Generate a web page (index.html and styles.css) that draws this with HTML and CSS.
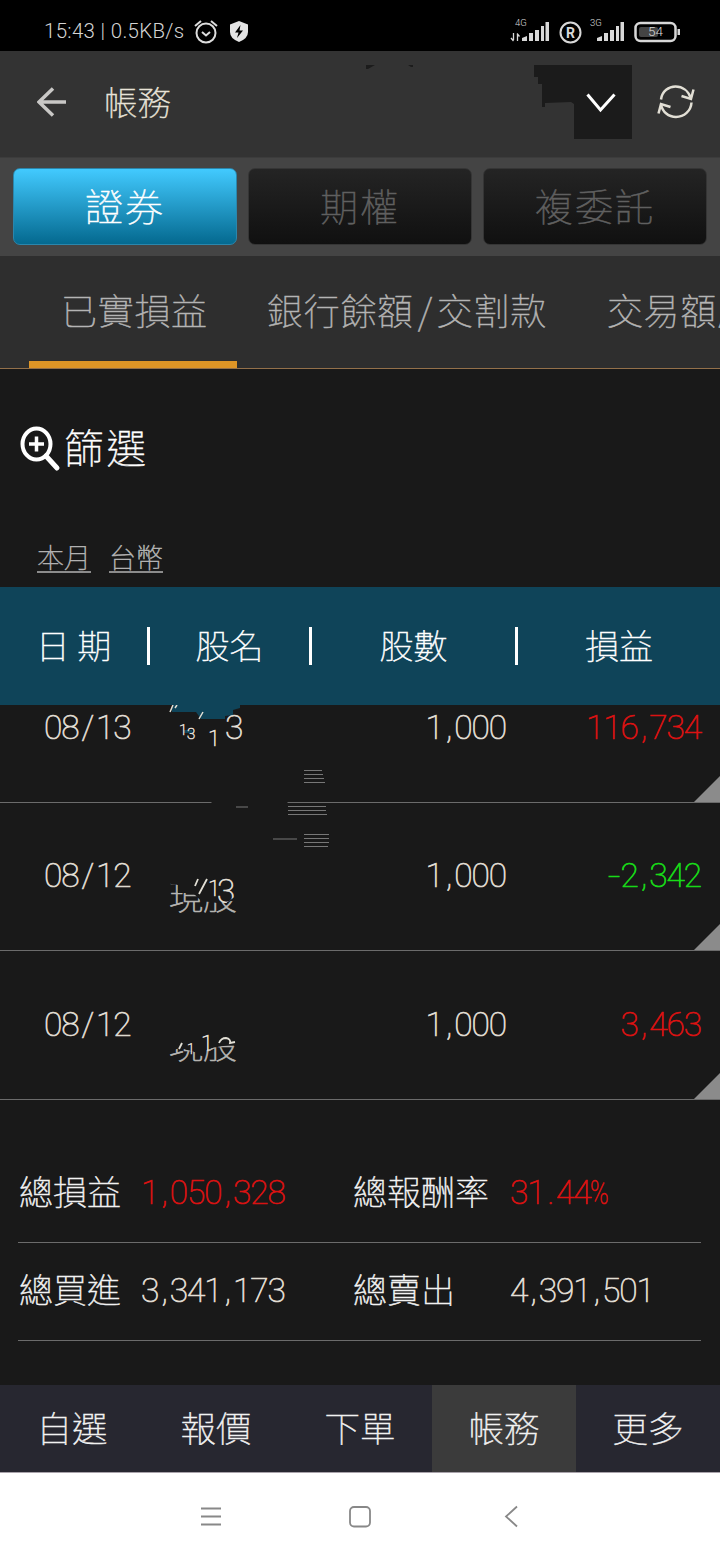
FILE: index.html
```html
<!DOCTYPE html>
<html lang="zh-Hant">
  <head>
    <meta charset="UTF-8" />
    <meta name="viewport" content="width=device-width, initial-scale=1.0" />
    <title>帳務</title>
    <link rel="stylesheet" href="styles.css">
  </head>
  <body>
    <div class="status">
      <span class="status-text">15:43 | 0.5KB/s</span>
      <svg class="alarm" width="24" height="24" viewBox="0 0 24 24" fill="none" stroke="#ddd" stroke-width="2">
        <circle cx="12" cy="13" r="9.5" />
        <path d="M1 6L7 1M17 1l6 5M8 12l4 3.500 4-3.500" />
      </svg>
      <svg class="shield" width="18" height="21" viewBox="0 0 18 21">
        <path fill="#e4e4e4" d="M9 0l9 3.500V11q0 6.500-9 10Q0 17.500 0 11V3.500z" />
        <path fill="#000" d="M10.500 4L5 11.500h3.500L7 17l6-7.500H9.500z" />
      </svg>
      <div class="status-right">
        <svg width="172" height="34" viewBox="510 14 172 34" fill="#d8d8d8">
          <path d="M522 41v-3l5-2v5zM529 41v-8h4v8zM535 41V30h4v11zM541 41V26h3v15zM545.500 41V22h3.500v19z" />
          <path d="M597 41v-3l5-2v5zM604 41v-8h4v8zM610 41V30h4v11zM616 41V26h3v15zM620.500 41V22h3.500v19z" />
          <path d="M513.500 33v7M511 38l2.500 3M517.500 41v-7M517 33.500l2.500 3" fill="none" stroke="#d8d8d8" stroke-width="1.300" />
          <text x="515" y="26" font-size="9.500">4G</text>
          <text x="590" y="26" font-size="9.500">3G</text>
          <circle cx="570.500" cy="32.500" r="10" fill="none" stroke="#d8d8d8" stroke-width="2" />
          <text x="566" y="37.500" font-size="14" class="r-mark">R</text>
          <rect x="635.500" y="23" width="40" height="18" rx="5" fill="none" stroke="#d8d8d8" stroke-width="2.500" />
          <rect x="639" y="27" width="19" height="10" rx="2" fill="#444" />
          <rect x="677.500" y="29" width="2.500" height="6" />
          <text x="648" y="36" font-size="13.500">54</text>
        </svg>
      </div>
    </div>

    <div class="header">
      <svg class="back" width="30" height="30" viewBox="0 0 30 30" fill="none" stroke="#c9c8c6" stroke-width="3.500">
        <path d="M29 15H2M16 1.500L2 15l14 13.500" />
      </svg>
      <h1>帳務</h1>
      <svg class="marks" width="48" height="5" viewBox="0 0 48 5" fill="#1c1c1c">
        <path d="M0 0h9L2 4H0zM42 0h5v2h-2z" />
      </svg>
      <svg class="picker" width="98" height="74" viewBox="0 0 98 74">
        <path fill="#1b1b1b" d="M0 0h98v74H40V39l-3-2-26 1v4H8V19H4v-7H0z" />
        <path d="M53.500 29.500L66.500 45l14-15.500" fill="none" stroke="#fff" stroke-width="3" />
      </svg>
      <svg class="refresh" width="38" height="36" viewBox="0 0 38 36" fill="none" stroke="#e2dfd5" stroke-width="2.500">
        <path d="M4 15.500C5 7 12 2.500 18.500 2.500c7 0 13 4.500 15.500 12M34.500 18.500C34 27 27 33 19 33 11.500 33 5.500 28 4 20.500" />
        <path d="M24.500 12l9.500 3 2.500-9.500M1.500 29.500L4 20l9.500 3" />
      </svg>
    </div>

    <div class="segments">
      <button class="segment segment--active" type="button">證券</button>
      <button class="segment" type="button">期權</button>
      <button class="segment" type="button">複委託</button>
    </div>

    <div class="tabs">
      <a class="tab tab--active">已實損益</a>
      <a class="tab">銀行餘額<span class="slash">/</span>交割款</a>
      <a class="tab tab--last">交易額度</a>
    </div>

    <div class="filter">
      <svg width="42" height="46" viewBox="0 0 42 46" fill="none" stroke="#fff">
        <ellipse cx="16.500" cy="18" rx="14" ry="15.500" stroke-width="4" />
        <path d="M16.500 10.500v15M9 18h15" stroke-width="3.500" />
        <path d="M26 30l11 12" stroke-width="5" stroke-linecap="round" />
      </svg>
      <span>篩選</span>
    </div>

    <div class="conditions">
      <a>本月</a>
      <a>台幣</a>
    </div>

    <div class="table-head">
      <span class="th th-date">日 期</span>
      <span class="th th-name">股名</span>
      <span class="th th-qty">股數</span>
      <span class="th th-pl">損益</span>
    </div>

    <div class="table-body">
      <div class="row row--first">
        <span class="num date">08<i class="over">/</i>13</span>
        <span class="num qty">1<i>,</i>000</span>
        <span class="num pl up">116<i>,</i>734</span>
        <div class="corner"></div>
      </div>
      <div class="row">
        <span class="num date">08<i class="over">/</i>12</span>
        <span class="num qty">1<i>,</i>000</span>
        <span class="num pl down"><i class="minus">-</i>2<i>,</i>342</span>
        <div class="corner"></div>
      </div>
      <div class="row">
        <span class="num date">08<i class="over">/</i>12</span>
        <span class="num qty">1<i>,</i>000</span>
        <span class="num pl up">3<i>,</i>463</span>
        <div class="corner"></div>
      </div>
      <!-- leftovers of the name column -->
      <svg class="residue" width="170" height="370" viewBox="165 700 170 370">
        <clipPath id="cut-a">
          <path d="M165 883l13 2v8h15l8 8 16 2 23-3v15h-75z" />
        </clipPath>
        <clipPath id="cut-b">
          <path d="M165 1053l15-5 18 5 14-5 28-5v22h-75z" />
        </clipPath>
        <clipPath id="cut-c">
          <path d="M205 875h35v18l-14 10h-21z" />
        </clipPath>
        <path fill="#0f4459" d="M172 700h64v5h4v3l-7 2v5l-8 1v3h-24l-5-7h-24z" />
        <path d="M170 712l3-7M175 708l2-3M199 719l4-7" stroke="#e2dfd5" stroke-width="1.500" />
        <path d="M184 730h8v3h-8z" fill="#0f4459" />
        <g class="digits">
          <text x="179" y="735" font-size="15">1</text>
          <text x="187" y="739" font-size="15">3</text>
          <text x="208" y="746" font-size="22">1</text>
          <text x="225" y="738.500" font-size="33.500">3</text>
        </g>
        <path d="M211.500 802.500h76" stroke="#191919" stroke-width="3" />
        <path d="M304 770.500h18M304 774.500h19M304 778.500h20M304 782.500h21M288 806.500h38M288 810.500h38M288 814.500h39M304 834.500h25M304 838.500h25M304 842.500h25M304 846.500h24" stroke="#777" />
        <path d="M236 807h12M273 839h24" stroke="#484848" stroke-width="2" />
        <text class="han" x="169" y="910" font-size="34" clip-path="url(#cut-a)">現股</text>
        <path d="M195 886l3-7M199 894l8-15" stroke="#e2dfd5" stroke-width="1.800" />
        <g class="digits" clip-path="url(#cut-c)">
          <text x="208" y="896" font-size="22">1</text>
          <text x="217" y="903" font-size="33">3</text>
        </g>
        <text class="han" x="169" y="1059" font-size="34" clip-path="url(#cut-b)">現股</text>
        <path d="M179 1049l3-6" stroke="#e2dfd5" stroke-width="1.800" />
        <g class="digits">
          <text x="187" y="1054" font-size="14">1</text>
          <text x="201" y="1051" font-size="22">1</text>
        </g>
        <path d="M219 1043q2-5 7-5 5 1 4 5l5-1" fill="none" stroke="#e2dfd5" stroke-width="1.800" />
      </svg>
    </div>

    <div class="summary">
      <div class="summary-row">
        <span class="label">總損益</span><span class="num value up">1<i>,</i>050<i>,</i>328</span>
        <span class="label label--wide">總報酬率</span><span class="num value up">31<i>.</i>44<i class="percent">%</i></span>
      </div>
      <div class="summary-row">
        <span class="label">總買進</span><span class="num value">3<i>,</i>341<i>,</i>173</span>
        <span class="label label--wide">總賣出</span><span class="num value">4<i>,</i>391<i>,</i>501</span>
      </div>
    </div>

    <div class="nav">
      <a>自選</a>
      <a>報價</a>
      <a>下單</a>
      <a class="active">帳務</a>
      <a>更多</a>
    </div>

    <div class="system-nav">
      <svg width="720" height="87" viewBox="0 0 720 87" fill="none" stroke="#888" stroke-width="1.800">
        <path d="M201 35.500h20M201 43.500h20M201 51.500h20" />
        <rect x="350" y="34" width="20" height="19.500" rx="4" />
        <path d="M517 33.500l-11 10 11 10" />
      </svg>
    </div>
  </body>
</html>
```
FILE: styles.css
```css
* {
  box-sizing: border-box;
}

body {
  margin: 0;
  width: 720px;
  height: 1560px;
  overflow: hidden;
  background: #191919;
  color: #f2f2f2;
  font-family: "Noto Sans CJK TC", "Noto Sans", sans-serif;
  font-weight: 100;
  -webkit-text-stroke: 0.5px;
}

svg {
  display: block;
  flex: none;
  font-family: Roboto, sans-serif;
}

/* status bar */
.status {
  display: flex;
  height: 51px;
  padding-left: 44px;
  background: #000;
  font-weight: 300;
}
.status-text {
  width: 150px;
  margin-top: 17px;
  color: #d4d4d4;
  font-family: Roboto, sans-serif;
  font-size: 20.5px;
  letter-spacing: 0.3px;
  line-height: 29px;
  white-space: nowrap;
  -webkit-text-stroke: 0;
}
.alarm {
  margin-top: 20px;
}
.shield {
  margin: 21px 0 0 12px;
}
.status-right {
  margin: 14px 38px 0 auto;
}
.r-mark {
  font-weight: 700;
}

/* header */
.header {
  display: flex;
  height: 106px;
  padding-left: 37px;
  background: #333;
}
.back {
  margin-top: 36px;
}
.header h1 {
  width: 262px;
  margin: 27px 0 0 37px;
  color: #e8e3d8;
  font-size: 33.5px;
  font-weight: inherit;
  line-height: 46px;
}
.marks {
  margin-top: 14px;
}
.picker {
  margin: 14px 0 0 120px;
}
.refresh {
  margin: 33px 0 0 25px;
}

/* segments */
.segments {
  display: flex;
  gap: 11px;
  height: 99px;
  padding: 10px 13px;
  background: #444;
  border-top: 1px solid #3c3c3c;
}
.segment {
  flex: 1;
  height: 77px;
  padding: 0 0 4px;
  border: 1px solid #353535;
  border-radius: 7px;
  background: linear-gradient(#242424, #101010);
  color: #606060;
  font: inherit;
  font-size: 38px;
  letter-spacing: 2px;
  line-height: 71px;
}
.segment--active {
  border-color: #2b86ac;
  background: linear-gradient(#42caff, #04698f);
  color: #fff;
}

/* tabs */
.tabs {
  display: flex;
  height: 113px;
  padding-left: 29px;
  overflow: hidden;
  background: #2e2e2e;
  border-bottom: 1px solid #93704a;
}
.tab {
  flex: none;
  height: 112px;
  color: #b4b4b4;
  font-size: 36px;
  letter-spacing: 0.7px;
  line-height: 107px;
  white-space: nowrap;
}
.tab--active {
  width: 208px;
  margin-right: 30px;
  padding-left: 32px;
  border-bottom: 7px solid #de9526;
}
.tab--last {
  margin-left: 60px;
}
.slash {
  display: inline-block;
  width: 23px;
  text-align: center;
}

/* filter */
.filter {
  display: flex;
  height: 158px;
  padding: 57px 0 0 20px;
  color: #fff;
  font-size: 39.5px;
  letter-spacing: 3px;
  line-height: 40px;
}
.filter span {
  margin-left: 2px;
}
.conditions {
  display: flex;
  gap: 18px;
  height: 60px;
  padding: 14px 0 0 37px;
  color: #b5b5b5;
  font-size: 27px;
  line-height: 31px;
}
.conditions a {
  height: 32px;
  border-bottom: 2px solid #8c8c8c;
}

/* table */
.table-head {
  display: flex;
  align-items: center;
  height: 118px;
  background: #0f4459;
  color: #fff;
  font-size: 34px;
}
.th {
  height: 38px;
  line-height: 35px;
  text-align: center;
}
.th:not(:last-child) {
  border-right: 3px solid #fff;
}
.th-date {
  width: 150px;
}
.th-name {
  width: 162px;
}
.th-qty {
  width: 206px;
}
.th-pl {
  flex: 1;
}

.num {
  font-family: Roboto, sans-serif;
  font-size: 33.5px;
  letter-spacing: -1.1px;
  -webkit-text-stroke: 0.7px;
}
/* separators take a fixed slot between the digits */
.num i {
  display: inline-block;
  width: 11.5px;
  font-style: normal;
  text-align: center;
}
.num .over {
  width: 17.5px;
}
.num .minus {
  width: 15px;
  transform: scaleX(1.3);
}
.num .percent {
  width: 17px;
  transform: scaleX(0.75);
  transform-origin: left;
}

.table-body {
  position: relative;
  height: 395px;
  overflow: hidden;
}
.row {
  position: relative;
  display: flex;
  align-items: center;
  height: 148.5px;
  padding-left: 44px;
  border-bottom: 1px solid #6b6b6b;
  color: #e2dfd5;
  line-height: 40px;
}
.row--first {
  margin-top: -51px;
}
.date {
  width: 200px;
}
.qty {
  width: 262px;
  text-align: right;
}
.pl {
  width: 195px;
  text-align: right;
}
.up {
  color: #dc1212;
}
.down {
  color: #18dc18;
}
.corner {
  position: absolute;
  right: 0;
  bottom: 0;
  border-bottom: 26px solid #8b8b8b;
  border-left: 26px solid transparent;
}
.residue {
  position: absolute;
  top: -5px;
  left: 165px;
}
.digits {
  fill: #e2dfd5;
  stroke: #e2dfd5;
  stroke-width: 0.7px;
}
.han {
  fill: #b5b4b1;
  stroke: #b5b4b1;
  stroke-width: 0.7px;
  font-family: "Noto Sans CJK TC", sans-serif;
}

/* summary */
.summary {
  height: 285px;
  margin: 0 19px 0 18px;
  padding-top: 45px;
}
.summary-row {
  display: flex;
  height: 98px;
  border-bottom: 1px solid #6b6b6b;
  line-height: 92px;
}
.label {
  flex: none;
  width: 123px;
  padding-left: 1px;
  font-size: 34px;
}
.label--wide {
  width: 158px;
}
.value {
  flex: none;
  width: 211px;
  line-height: 95px;
}
.label--wide + .value {
  width: 190px;
}
.summary-row .value:not(.up) {
  color: #e2dfd5;
}

/* bottom navigation */
.nav {
  display: flex;
  height: 88px;
  background: #272730;
  border-bottom: 1px solid #a9a3ab;
}
.nav a {
  flex: 1;
  font-size: 35.5px;
  line-height: 83px;
  text-align: center;
}
.nav .active {
  background: #3b3b3b;
}
.system-nav {
  height: 87px;
  background: #fff;
}
```
